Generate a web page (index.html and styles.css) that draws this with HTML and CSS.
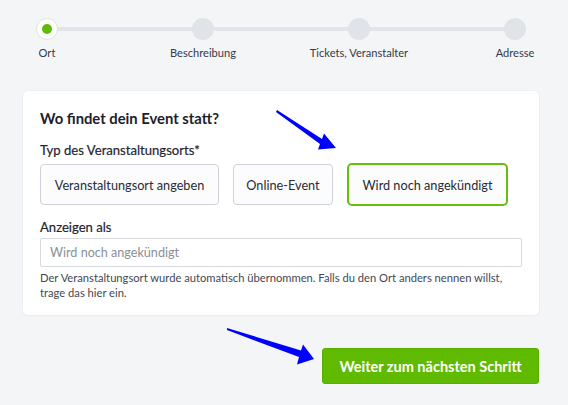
FILE: index.html
```html
<!DOCTYPE html>
<html lang="de">
<head>
<meta charset="utf-8">
<link rel="stylesheet" href="styles.css">
</head>
<body>
<div class="page">
  <div class="stepper">
    <div class="step active"><span class="dot"></span><span class="label">Ort</span></div>
    <div class="step"><span class="dot"></span><span class="label">Beschreibung</span></div>
    <div class="step"><span class="dot"></span><span class="label">Tickets, Veranstalter</span></div>
    <div class="step"><span class="dot"></span><span class="label">Adresse</span></div>
  </div>

  <div class="card">
    <h2 class="title">Wo findet dein Event statt?</h2>
    <div class="field-label">Typ des Veranstaltungsorts*</div>
    <div class="options">
      <button class="option opt-venue">Veranstaltungsort angeben</button>
      <button class="option opt-online">Online-Event</button>
      <button class="option opt-tba selected">Wird noch angekündigt</button>
    </div>
    <div class="field-label second">Anzeigen als</div>
    <input class="text-input" type="text" placeholder="Wird noch angekündigt">
    <p class="help">Der Veranstaltungsort wurde automatisch übernommen. Falls du den Ort anders nennen willst, trage das hier ein.</p>
  </div>

  <div class="actions">
    <button class="primary">Weiter zum nächsten Schritt</button>
  </div>

  <svg class="arrow" width="568" height="405" viewBox="0 0 568 405">
    <polygon points="277,110 322,139 324,133.5 336,148 318,149.5 320,144 276,112" fill="#0000ff"/>
    <polygon points="227,328 301,350.5 303,344.5 314,359 297,364.5 299,357 227,330" fill="#0000ff"/>
  </svg>
</div>
</body>
</html>
```

FILE: styles.css
```css
* { box-sizing: border-box; }
html, body { margin: 0; padding: 0; }
body {
  background: #f4f5f7;
  font-family: "Lato", "Liberation Sans", sans-serif;
  color: #1f2430;
  width: 568px;
  height: 405px;
  overflow: hidden;
}
.page { position: relative; width: 568px; height: 405px; padding-top: 18px; }

.stepper {
  position: relative;
  display: flex;
  justify-content: space-between;
  margin-left: 36px;
  width: 490px;
}
.stepper::before {
  content: "";
  position: absolute;
  left: 11px;
  right: 11px;
  top: 9px;
  height: 4px;
  background: #e1e4e9;
}
.step {
  position: relative;
  width: 22px;
  display: flex;
  flex-direction: column;
  align-items: center;
}
.dot {
  width: 22px;
  height: 22px;
  border-radius: 50%;
  background: #e0e3e8;
}
.step.active .dot {
  background: #fff;
  border: 1px solid #d6eec0;
  display: flex;
  align-items: center;
  justify-content: center;
}
.step.active .dot::after {
  content: "";
  width: 10px;
  height: 10px;
  border-radius: 50%;
  background: #5fba0a;
}
.label {
  white-space: nowrap;
  font-size: 11.1px;
  line-height: 14px;
  margin-top: 6px;
  color: #353a46;
}

.card {
  margin: 31px 0 0 23px;
  width: 516px;
  background: #fff;
  border-radius: 5px;
  box-shadow: 0 0 0 1px #eceef1, 0 1px 2px rgba(0,0,0,0.05);
  padding: 17px 17px 15px 17px;
}
.title {
  margin: 0;
  font-size: 14.8px;
  line-height: 20px;
  font-weight: 700;
  color: #1c212c;
}
.field-label {
  margin-top: 13px;
  font-size: 13.1px;
  line-height: 18px;
  color: #1f2430;
  -webkit-text-stroke: 0.2px #1f2430;
}
.field-label.second { margin-top: 12px; }
.options {
  display: flex;
  gap: 14px;
  margin-top: 4px;
  align-items: center;
}
.option {
  font-family: inherit;
  height: 41px;
  padding: 0;
  white-space: nowrap;
  font-size: 12.7px;
  color: #262b36;
  background: #fcfcfd;
  border: 1px solid #cdd2da;
  border-radius: 4px;
}
.opt-venue { width: 179px; }
.opt-online { width: 100px; }
.opt-tba { width: 161px; }
.option.selected {
  height: 43px;
  border: 2px solid #66bf10;
  border-radius: 5px;
}
.text-input {
  display: block;
  margin-top: 2px;
  width: 482px;
  height: 29px;
  padding: 0 9px;
  font-family: inherit;
  font-size: 12.6px;
  border: 1px solid #d6dae0;
  border-radius: 2px;
  background: #fff;
}
.text-input::placeholder { color: #8a8f98; }
.help {
  margin: 3px 0 0 0;
  font-size: 11.2px;
  line-height: 15px;
  color: #434854;
}

.actions {
  display: flex;
  justify-content: flex-end;
  width: 539px;
  margin-top: 33px;
}
.primary {
  font-family: inherit;
  height: 36px;
  width: 217px;
  background: #5fba00;
  color: #fff;
  font-weight: 700;
  font-size: 14.5px;
  border: 1px solid #58ad00;
  border-radius: 3px;
}

.arrow {
  position: absolute;
  left: 0;
  top: 0;
  pointer-events: none;
}
```
